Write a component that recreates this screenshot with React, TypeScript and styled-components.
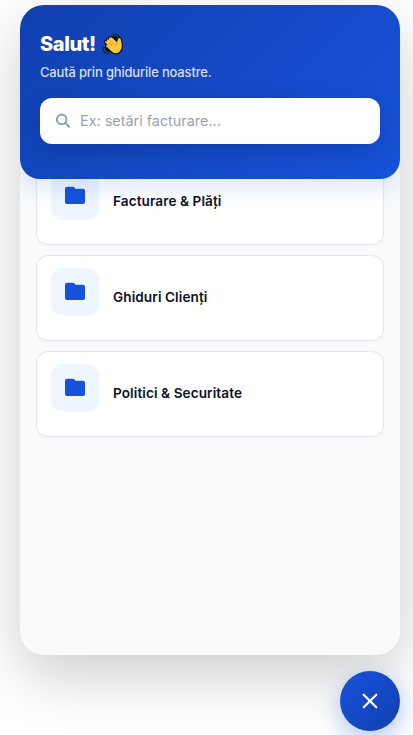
import React from "react";
import styled, { createGlobalStyle } from "styled-components";

const GlobalStyle = createGlobalStyle`
  *, *::before, *::after { box-sizing: border-box; }
  html, body { margin: 0; background: #fff; overflow: hidden; }
  body, input, button { font-family: Inter, "Liberation Sans", sans-serif; }
`;

const Page = styled.div`
  display: flex;
  flex-direction: column;
  align-items: flex-end;
  gap: 16px;
  height: 735px;
  padding: 5px 13px 4px 20px;
`;

const Panel = styled.section`
  display: flex;
  flex-direction: column;
  width: 380px;
  height: 650px;
  border-radius: 24px;
  overflow: hidden;
  background: #f8fafc;
  box-shadow: 0 20px 60px rgba(0, 0, 0, 0.2);
`;

const Header = styled.header`
  position: relative;
  z-index: 1;
  flex: none;
  height: 174px;
  padding: 27px 20px 0;
  border-radius: 0 0 20px 20px;
  color: #fff;
  background: linear-gradient(135deg, #1140af 0%, #1652db 100%);
  box-shadow: 0 8px 24px rgba(22, 82, 219, 0.15);
`;

const Title = styled.h1`
  display: flex;
  align-items: center;
  gap: 6px;
  height: 24px;
  margin: 0;
  font-size: 20px;
  line-height: 24px;
  font-weight: 800;
  letter-spacing: -0.4px;
`;

const Subtitle = styled.p`
  margin: 8px 0 0;
  font-size: 13px;
  line-height: 16px;
  font-weight: 500;
  letter-spacing: -0.18px;
  color: rgba(255, 255, 255, 0.84);
`;

const SearchBox = styled.label`
  display: flex;
  align-items: center;
  gap: 8px;
  height: 46px;
  margin-top: 18px;
  padding: 0 14px;
  border-radius: 12px;
  background: #fff;
  box-shadow: 0 8px 24px rgba(0, 0, 0, 0.15);
  color: #94a3b8;
`;

const SearchInput = styled.input`
  flex: 1;
  min-width: 0;
  padding: 0 0 1px;
  border: 0;
  outline: 0;
  background: transparent;
  font-size: 14.4px;
  color: #0f172a;
  &::placeholder { color: #9ca3af; opacity: 1; }
`;

const CategoryList = styled.main`
  display: flex;
  flex-direction: column;
  gap: 10px;
  margin-top: -20px;
  padding: 0 16px;
`;

const Card = styled.article`
  display: flex;
  align-items: center;
  gap: 14px;
  height: 86px;
  padding: 12px 14px;
  border: 1px solid #e2e8f0;
  border-radius: 12px;
  background: #fff;
  box-shadow: 0 1px 3px rgba(0, 0, 0, 0.03);
`;

const IconTile = styled.span`
  display: flex;
  align-self: flex-start;
  align-items: center;
  justify-content: center;
  width: 48px;
  height: 48px;
  border-radius: 12px;
  background: #eff6ff;
  color: #1652db;
`;

const CardTitle = styled.h2`
  margin: 0;
  padding-bottom: 2px;
  font-size: 13.6px;
  line-height: 18px;
  font-weight: 600;
  letter-spacing: 0.08px;
  color: #0b1224;
`;

const CloseButton = styled.button`
  display: flex;
  flex: none;
  align-items: center;
  justify-content: center;
  width: 60px;
  height: 60px;
  padding: 0;
  border: 0;
  border-radius: 50%;
  color: #fff;
  background: linear-gradient(135deg, #1652db 0%, #1140af 100%);
  box-shadow: 0 8px 24px rgba(22, 82, 219, 0.35);
`;

const WavingHand = () => (
  <svg width="22" height="22" viewBox="0 0 22 22" fill="none" aria-hidden="true">
    <g strokeLinecap="round">
      <path d="M12.2 2c2.4-.2 4 1.3 4.2 3.6M12.6 4.6c1 0 1.5.7 1.8 1.5M2 15.4c.1 2.3 1.5 3.8 4 4M4 15.2c.1 1.2.8 1.8 2 2.1" stroke="#041b28" strokeWidth="3" />
      <path d="M12.2 2c2.4-.2 4 1.3 4.2 3.6M2 15.4c.1 2.3 1.5 3.8 4 4" stroke="#1a7184" strokeWidth="1" />
    </g>
    <path d="M8.2 4.1c.9-.9 1.8-.5 2.6.4l3.9 3.8.9-2.6c.6-1.9 3.8-1.4 3.9.9.1 1.5.6 3 .8 4.8.5 3.6-.3 5.9-2.5 7.8-2.8 2.4-6.1 2.1-8.8-.4l-5-4.8c-1.3-1.3-.3-2.6.7-2.3L2.9 9.8C1.8 8.5 3.2 6.9 4.5 7.8 3.9 6.1 5.2 5.2 6.4 6 6.2 4.9 7.1 3.9 8.2 4.1Z" fill="#ffc83d" stroke="#111" strokeWidth="1.2" strokeLinejoin="round" />
    <path d="m5.4 11.8 3 2.9M6.4 9l3.8 3.7M8.5 7.4l3.3 3.3M15 9.2c-.2 1.6-1.3 2-1.4 3.9" stroke="#d98a12" strokeWidth=".7" strokeLinecap="round" />
  </svg>
);

const SearchIcon = () => (
  <svg width="18" height="18" viewBox="0 0 18 18" fill="none" stroke="currentColor" strokeWidth="2.1" strokeLinecap="round" aria-hidden="true">
    <circle cx="7.7" cy="7.4" r="4.8" />
    <path d="m11.4 11.1 3.7 3.7" />
  </svg>
);

const FolderIcon = () => (
  <svg width="24" height="24" viewBox="0 0 24 24" fill="currentColor" aria-hidden="true">
    <path d="M4 2.7h6q1.1 0 1.6.9l.7 1.2H20q2 0 2 2V18q0 2-2 2H4q-2 0-2-2V4.7q0-2 2-2Z" />
  </svg>
);

const CloseIcon = () => (
  <svg width="24" height="24" viewBox="0 0 24 24" fill="none" stroke="currentColor" strokeWidth="2.2" strokeLinecap="round" aria-hidden="true">
    <path d="M5.7 5.7l12.6 12.6M18.3 5.7l-12.6 12.6" />
  </svg>
);

const categories = ["Facturare & Plăți", "Ghiduri Clienți", "Politici & Securitate"];

export default function App() {
  return (
    <>
      <GlobalStyle />
      <Page>
        <Panel>
          <Header>
            <Title>Salut! <WavingHand /></Title>
            <Subtitle>Caută prin ghidurile noastre.</Subtitle>
            <SearchBox>
              <SearchIcon />
              <SearchInput placeholder="Ex: setări facturare..." />
            </SearchBox>
          </Header>
          <CategoryList>
            {categories.map((name) => (
              <Card key={name}>
                <IconTile><FolderIcon /></IconTile>
                <CardTitle>{name}</CardTitle>
              </Card>
            ))}
          </CategoryList>
        </Panel>
        <CloseButton aria-label="Închide"><CloseIcon /></CloseButton>
      </Page>
    </>
  );
}
